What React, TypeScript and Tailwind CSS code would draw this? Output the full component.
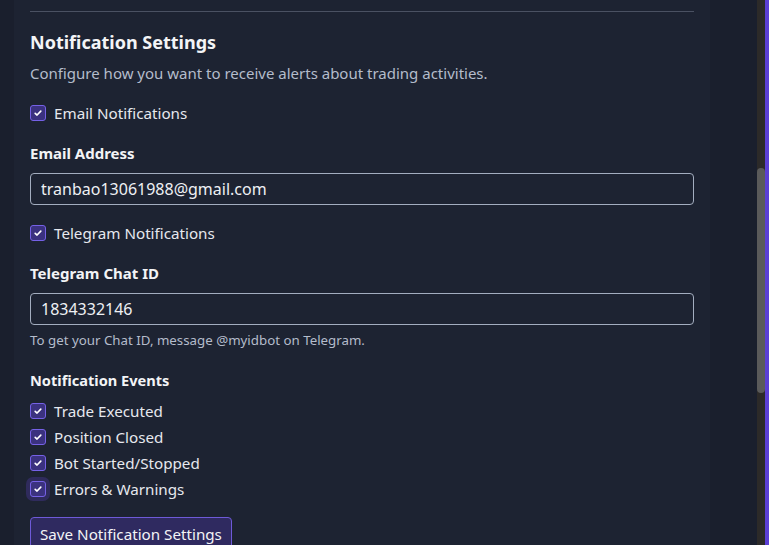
import { useState } from 'react'

const events = ['Trade Executed', 'Position Closed', 'Bot Started/Stopped', 'Errors & Warnings']

function Check({ label, checked, onChange, focused }: { label: string; checked: boolean; onChange: () => void; focused?: boolean }) {
  return (
    <label className="flex items-center gap-2 cursor-pointer h-[20px]">
      <span
        className={`flex items-center justify-center w-4 h-4 rounded-[3px] border border-[#7561e6] bg-[#3b327f] ${focused ? 'ring-4 ring-[#2f2b5c]' : ''}`}
        onClick={onChange}
      >
        {checked && (
          <svg viewBox="0 0 16 16" className="w-[10px] h-[10px]" fill="none" stroke="white" strokeWidth="2.6" strokeLinecap="round" strokeLinejoin="round">
            <path d="M3.5 8.5l3 2.8 6-6.3" />
          </svg>
        )}
      </span>
      <span className="text-[15.2px] text-[#e6e8ee]">{label}</span>
    </label>
  )
}

export default function App() {
  const [email, setEmail] = useState(true)
  const [telegram, setTelegram] = useState(true)
  const [ev, setEv] = useState([true, true, true, true])

  return (
    <div className="h-[545px] w-[769px] overflow-hidden flex bg-[#1a1f2d]" style={{ fontFamily: '"Noto Sans", "Open Sans", sans-serif' }}>
      <div className="flex-1 pl-[14px] pr-[47px]">
        <div className="h-full bg-[#1d2332] px-4">
          <div className="h-[12px] border-b border-[#4a5162]" />
          <h2 className="mt-[18px] text-[18px] font-bold text-[#f3f4f6] leading-[24px]">Notification Settings</h2>
          <p className="mt-[8px] text-[15px] text-[#b4bccb] leading-[22px]">Configure how you want to receive alerts about trading activities.</p>

          <div className="mt-[19px]">
            <Check label="Email Notifications" checked={email} onChange={() => setEmail(!email)} />
          </div>

          <div className="mt-[20px] text-[15px] font-bold text-[#f3f4f6] leading-[20px]">Email Address</div>
          <input
            className="mt-[10px] w-full h-[32px] rounded-[4px] border border-[#a3adbf] bg-transparent px-[10px] text-[16px] text-[#eef0f4] outline-none"
            defaultValue="tranbao13061988@gmail.com"
          />

          <div className="mt-[18px]">
            <Check label="Telegram Notifications" checked={telegram} onChange={() => setTelegram(!telegram)} />
          </div>

          <div className="mt-[20px] text-[15px] font-bold text-[#f3f4f6] leading-[20px]">Telegram Chat ID</div>
          <input
            className="mt-[10px] w-full h-[32px] rounded-[4px] border border-[#a3adbf] bg-transparent px-[10px] text-[16px] text-[#eef0f4] outline-none"
            defaultValue="1834332146"
          />
          <p className="mt-[6px] text-[13.3px] text-[#b4bccb] leading-[18px]">To get your Chat ID, message @myidbot on Telegram.</p>

          <div className="mt-[21px] text-[14.6px] font-bold text-[#f3f4f6] leading-[20px]">Notification Events</div>
          <div className="mt-[11px] flex flex-col gap-[6px]">
            {events.map((e, i) => (
              <Check
                key={e}
                label={e}
                checked={ev[i]}
                focused={i === 3}
                onChange={() => setEv(ev.map((v, j) => (j === i ? !v : v)))}
              />
            ))}
          </div>

          <button className="mt-[18px] h-[34px] px-[9px] rounded-[4px] border border-[#6e5ad8] bg-[#2f2a60] text-[15.2px] text-[#f3f4f6]">
            Save Notification Settings
          </button>
        </div>
      </div>
      <div className="w-[8px] bg-[#2c2a29] flex flex-col">
        <div className="mt-[168px] h-[225px] rounded-[4px] bg-[#5a5a5a]" />
      </div>
      <div className="w-[4px] bg-[#5b3fd4]" />
    </div>
  )
}
